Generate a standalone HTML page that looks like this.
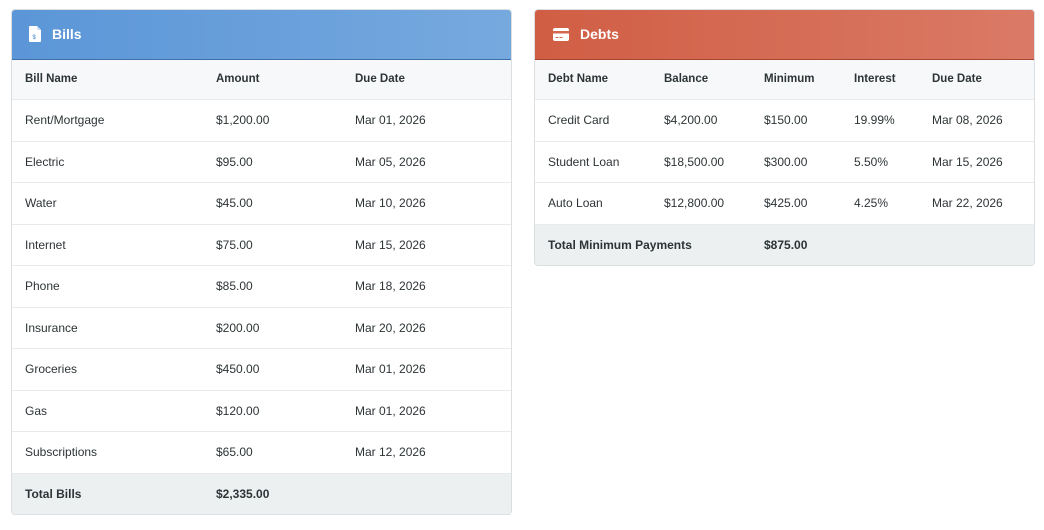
<!DOCTYPE html>
<html><head><style>
body{margin:0;background:#fff;font-family:"Liberation Sans",sans-serif;font-size:12px;color:#2d3436;}
.card{position:absolute;top:9px;width:499px;border:1px solid #dcdfe2;border-radius:4px;overflow:hidden;background:#fff}
.hd{height:49px;border-bottom:1px solid #3f6fa8;color:#fff;font-weight:bold;font-size:14px;position:relative}
.hd span{position:absolute;top:16px}
.row{position:relative;height:40.5px;border-bottom:1px solid #e8eaec}
.row div{position:absolute;top:13px}
.th{background:#f7f8fa;height:39px;font-weight:bold;font-size:11.5px}
.row.th div{top:13px}
.tot{background:#ecf0f1;font-weight:bold;border-bottom:none}
</style></head><body>
<div class="card" style="left:11px">
<div class="hd" style="background:linear-gradient(90deg,#5b96d8,#76a9de)">
<svg style="position:absolute;left:17px;top:16px" width="12" height="16" viewBox="0 0 12 16"><path d="M1 0h7l4 4v11a1 1 0 0 1-1 1H1a1 1 0 0 1-1-1V1a1 1 0 0 1 1-1z" fill="#fff"/><path d="M8 0v4h4" fill="#cfe0f4"/><text x="3.5" y="13" font-size="6" fill="#6a9fdc" font-family="Liberation Sans">$</text></svg>
<span style="left:40px">Bills</span></div>
<div class="row th"><div style="left:13px">Bill Name</div><div style="left:204px">Amount</div><div style="left:343px">Due Date</div></div>
<div class="row"><div style="left:13px">Rent/Mortgage</div><div style="left:204px">$1,200.00</div><div style="left:343px">Mar 01, 2026</div></div>
<div class="row"><div style="left:13px">Electric</div><div style="left:204px">$95.00</div><div style="left:343px">Mar 05, 2026</div></div>
<div class="row"><div style="left:13px">Water</div><div style="left:204px">$45.00</div><div style="left:343px">Mar 10, 2026</div></div>
<div class="row"><div style="left:13px">Internet</div><div style="left:204px">$75.00</div><div style="left:343px">Mar 15, 2026</div></div>
<div class="row"><div style="left:13px">Phone</div><div style="left:204px">$85.00</div><div style="left:343px">Mar 18, 2026</div></div>
<div class="row"><div style="left:13px">Insurance</div><div style="left:204px">$200.00</div><div style="left:343px">Mar 20, 2026</div></div>
<div class="row"><div style="left:13px">Groceries</div><div style="left:204px">$450.00</div><div style="left:343px">Mar 01, 2026</div></div>
<div class="row"><div style="left:13px">Gas</div><div style="left:204px">$120.00</div><div style="left:343px">Mar 01, 2026</div></div>
<div class="row"><div style="left:13px">Subscriptions</div><div style="left:204px">$65.00</div><div style="left:343px">Mar 12, 2026</div></div>
<div class="row tot"><div style="left:13px">Total Bills</div><div style="left:204px">$2,335.00</div></div>
</div>
<div class="card" style="left:534px">
<div class="hd" style="background:linear-gradient(90deg,#d05e44,#da7a66);border-bottom-color:#a84530">
<svg style="position:absolute;left:18px;top:18px" width="16" height="13" viewBox="0 0 16 13"><rect x="0" y="0" width="16" height="13" rx="2" fill="#fff"/><rect x="0" y="3" width="16" height="2.5" fill="#d3674f"/><rect x="2.5" y="9" width="3" height="1" fill="#d3674f"/><rect x="6.5" y="9" width="3" height="1" fill="#d3674f"/></svg>
<span style="left:45px">Debts</span></div>
<div class="row th"><div style="left:13px">Debt Name</div><div style="left:129px">Balance</div><div style="left:229px">Minimum</div><div style="left:319px">Interest</div><div style="left:397px">Due Date</div></div>
<div class="row"><div style="left:13px">Credit Card</div><div style="left:129px">$4,200.00</div><div style="left:229px">$150.00</div><div style="left:319px">19.99%</div><div style="left:397px">Mar 08, 2026</div></div>
<div class="row"><div style="left:13px">Student Loan</div><div style="left:129px">$18,500.00</div><div style="left:229px">$300.00</div><div style="left:319px">5.50%</div><div style="left:397px">Mar 15, 2026</div></div>
<div class="row"><div style="left:13px">Auto Loan</div><div style="left:129px">$12,800.00</div><div style="left:229px">$425.00</div><div style="left:319px">4.25%</div><div style="left:397px">Mar 22, 2026</div></div>
<div class="row tot"><div style="left:13px">Total Minimum Payments</div><div style="left:229px">$875.00</div></div>
</div>
</body></html>
